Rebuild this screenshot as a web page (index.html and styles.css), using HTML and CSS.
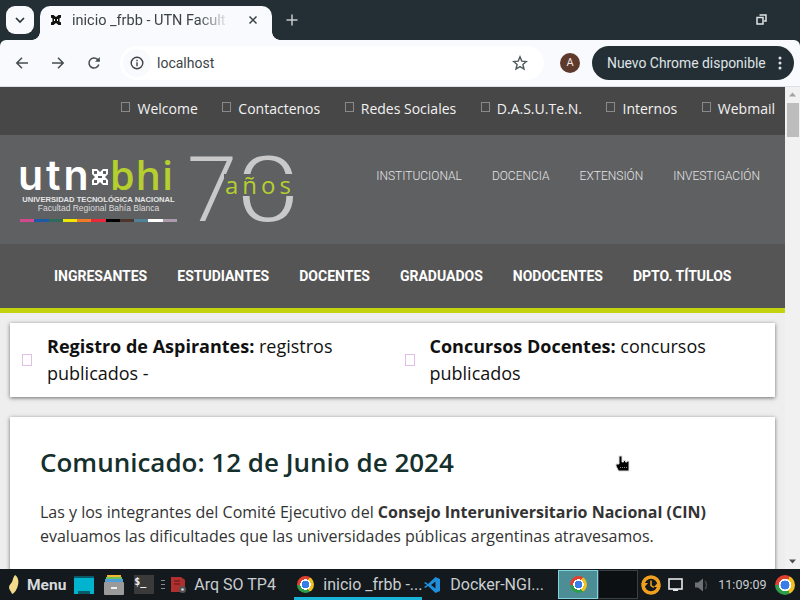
FILE: index.html
```html
<!DOCTYPE html>
<html lang="es">
<head>
    <meta charset="UTF-8">
    <title>inicio _frbb - UTN Facultad Regional Bahía Blanca</title>
    <link rel="stylesheet" href="styles.css">
</head>
<body>
    <!-- browser tabs -->
    <div class="tabstrip">
        <div class="tab-search">
            <svg width="12" height="8" viewBox="0 0 12 8"><path d="M2 2l4 4 4-4" fill="none" stroke="#2a3338" stroke-width="1.700"/></svg>
        </div>
        <div class="tab">
            <svg class="tab-icon" width="12" height="12" viewBox="0 0 12 12"><path d="M1 1h2.500l2.500 2 2.500-2H11v2.500L9.500 4.500v3L11 8.500V11H8.500L6 9l-2.500 2H1V8.500l1.500-1v-3L1 3.500z" fill="#111"/><path d="M4.500 5v2M7.500 5v2" stroke="#fff" stroke-width="1"/></svg>
            <span class="tab-title">inicio _frbb - UTN Facult</span>
            <svg class="tab-close" width="10" height="10" viewBox="0 0 10 10"><path d="M1.500 1.500l7 7M8.500 1.500l-7 7" stroke="#3c4347" stroke-width="1.500"/></svg>
        </div>
        <svg class="tab-new" width="14" height="14" viewBox="0 0 14 14"><path d="M7 1.500v11M1.500 7h11" stroke="#c5cbce" stroke-width="1.500"/></svg>
        <svg class="win-restore" width="11" height="11" viewBox="0 0 11 11"><path d="M3.500 1h6.500v6h-2M1 3.500h6v6.500h-6z" fill="none" stroke="#dfe3e5" stroke-width="1.500"/></svg>
    </div>

    <!-- browser toolbar -->
    <div class="toolbar">
        <svg class="tool" width="14" height="14" viewBox="0 0 14 14"><path d="M13 7H2M7 1.800L1.800 7 7 12.200" fill="none" stroke="#444c50" stroke-width="1.500"/></svg>
        <svg class="tool" width="14" height="14" viewBox="0 0 14 14"><path d="M1 7h11M7 1.800L12.200 7 7 12.200" fill="none" stroke="#444c50" stroke-width="1.500"/></svg>
        <svg class="tool" width="14" height="14" viewBox="0 0 14 14"><path d="M11.800 8.500A5 5 0 1 1 10.500 3.400L12.300 5" fill="none" stroke="#444c50" stroke-width="1.500"/><path d="M12.800 1v4.800H8z" fill="#444c50"/></svg>
        <div class="omnibox">
            <div class="omni-info">
                <svg width="14" height="14" viewBox="0 0 14 14"><circle cx="7" cy="7" r="5.800" fill="none" stroke="#3c4347" stroke-width="1.400"/><path d="M7 6.200v4M7 3.800v1.400" stroke="#3c4347" stroke-width="1.400"/></svg>
            </div>
            <span class="omni-url">localhost</span>
            <svg class="omni-star" width="16" height="16" viewBox="0 0 16 16"><path d="M8 1.800l1.800 4.300 4.600.4-3.500 3 1.100 4.500L8 11.600 4 14l1.100-4.500-3.500-3 4.600-.4z" fill="none" stroke="#4f585c" stroke-width="1.400"/></svg>
        </div>
        <div class="avatar">A</div>
        <div class="update-pill">
            <span>Nuevo Chrome disponible</span>
            <svg width="4" height="14" viewBox="0 0 4 14"><circle cx="2" cy="2" r="1.500" fill="#dfe3e5"/><circle cx="2" cy="7" r="1.500" fill="#dfe3e5"/><circle cx="2" cy="12" r="1.500" fill="#dfe3e5"/></svg>
        </div>
    </div>

    <!-- page viewport -->
    <div class="viewport">
        <div class="page">
            <div class="topbar">
                <a class="toplink"><i class="box"></i>Welcome</a>
                <a class="toplink"><i class="box"></i>Contactenos</a>
                <a class="toplink"><i class="box"></i>Redes Sociales</a>
                <a class="toplink"><i class="box"></i>D.A.S.U.Te.N.</a>
                <a class="toplink"><i class="box"></i>Internos</a>
                <a class="toplink"><i class="box"></i>Webmail</a>
            </div>
            <header class="site-head">
                <div class="logo">
                    <div class="logo-main">
                        <div class="logo-name">
                            <span class="utn">utn</span>
                            <svg class="utn-mark" width="16" height="16" viewBox="0 0 16 16"><path d="M0 0h5l3 3 3-3h5v5l-3 3 3 3v5h-5l-3-3-3 3H0v-5l3-3-3-3z" fill="#fff"/><path d="M2 2h3v3H2zM11 2h3v3h-3zM2 11h3v3H2zM11 11h3v3h-3zM6 7h4v2H6z" fill="#5f6062"/></svg>
                            <span class="bhi">bhi</span>
                        </div>
                        <div class="logo-uni">UNIVERSIDAD TECNOLÓGICA NACIONAL</div>
                        <div class="logo-fac">Facultad Regional Bahía Blanca</div>
                        <div class="logo-stripes">
                            <i class="c1"></i><i class="c2"></i><i class="c3"></i><i class="c4"></i><i class="c5"></i><i class="c6"></i><i class="c7"></i><i class="c8"></i><i class="c9"></i><i class="c10"></i><i class="c11"></i>
                        </div>
                    </div>
                    <div class="logo-70">
                        <span class="seven">7</span><span class="zero">0</span>
                        <span class="anos">años</span>
                    </div>
                </div>
                <nav class="head-nav">
                    <a>INSTITUCIONAL</a>
                    <a>DOCENCIA</a>
                    <a>EXTENSIÓN</a>
                    <a>INVESTIGACIÓN</a>
                </nav>
            </header>
            <nav class="main-nav">
                <a>INGRESANTES</a>
                <a>ESTUDIANTES</a>
                <a>DOCENTES</a>
                <a>GRADUADOS</a>
                <a>NODOCENTES</a>
                <a>DPTO. TÍTULOS</a>
            </nav>
            <div class="content">
                <section class="card news">
                    <div class="news-item">
                        <i class="news-box"></i>
                        <p><b>Registro de Aspirantes:</b> registros publicados -</p>
                    </div>
                    <div class="news-item">
                        <i class="news-box"></i>
                        <p><b>Concursos Docentes:</b> concursos publicados</p>
                    </div>
                </section>
                <section class="card article">
                    <h1>Comunicado: 12 de Junio de 2024</h1>
                    <p>Las y los integrantes del Comité Ejecutivo del <b>Consejo Interuniversitario Nacional (CIN)</b> evaluamos las dificultades que las universidades públicas argentinas atravesamos.</p>
                </section>
            </div>
        </div>
        <div class="scrollbar">
            <svg width="15" height="15" viewBox="0 0 15 15"><path d="M4 9.500h7L7.500 5.500z" fill="#a3a3a3"/></svg>
            <div class="scroll-track"><div class="scroll-thumb"></div></div>
            <svg width="15" height="15" viewBox="0 0 15 15"><path d="M4 5.500h7L7.500 9.500z" fill="#505050"/></svg>
        </div>
        <svg class="cursor" width="16" height="18" viewBox="0 0 16 18"><path d="M4 1h3v6h1.500V5.500h2V7H12V6h2v10H3.500L1 11V9h3z" fill="#000" stroke="#ddd" stroke-width="1"/><path d="M5 12.500h7" stroke="#888" stroke-width="1" stroke-dasharray="1 1"/></svg>
    </div>

    <!-- desktop panel -->
    <div class="panel">
        <div class="panel-menu">
            <svg width="12" height="22" viewBox="0 0 12 22"><path d="M7 1c3 2 4 6 3 10-1 4-3 8-6 9-1-3-3-4-3-7 0-2 2-3 3-5 1-2 1-5 3-7z" fill="#f3d98b"/></svg>
            <b>Menu</b>
        </div>
        <div class="launchers">
            <svg width="20" height="20" viewBox="0 0 20 20"><rect y="1" width="20" height="18" fill="#00b4d0"/><rect y="1" width="20" height="2" fill="#0b5a68"/><rect x="4" y="16" width="12" height="3" fill="#0b5a68"/></svg>
            <svg width="20" height="20" viewBox="0 0 20 20"><rect x="3" y="0" width="14" height="3" fill="#f2b632"/><rect x="2" y="2" width="16" height="3" fill="#6cbf5a"/><rect x="1" y="4" width="18" height="3" fill="#4f9fd8"/><rect y="7" width="20" height="13" rx="1" fill="#9a9a9a"/><rect x="7" y="12" width="6" height="2" fill="#f0f0f0"/></svg>
            <div class="term"><span>$_</span></div>
        </div>
        <svg class="grip" width="4" height="9" viewBox="0 0 4 9"><path d="M0 .5h4M0 4.500h4M0 8.500h4" stroke="#888" stroke-width="1"/></svg>
        <div class="task task-so">
            <svg width="16" height="18" viewBox="0 0 16 18"><path d="M0 1h10l4 3v12H0z" fill="#b03030"/><path d="M3 5h6M3 8h6" stroke="#7c1d1d" stroke-width="1.500"/><circle cx="11.500" cy="13.500" r="3.500" fill="#555"/><circle cx="11.500" cy="13.500" r="1.300" fill="#ddd"/></svg>
            <span>Arq SO TP4</span>
        </div>
        <div class="task task-active">
            <i class="chrome chrome-sm"></i>
            <span>inicio _frbb -...</span>
        </div>
        <div class="task task-code">
            <svg width="16" height="16" viewBox="0 0 16 16"><path d="M11.500 0L16 2v12l-4.500 2L4 9l-2.500 2L0 10l3-2-3-2 1.500-1L4 7z" fill="#1f8fdc"/><path d="M11.500 4.500L7 8l4.500 3.500z" fill="#14181c"/></svg>
            <span>Docker-NGI...</span>
        </div>
        <div class="pager">
            <div class="pager-cell pager-on"><i class="chrome chrome-sm"></i></div>
            <div class="pager-cell"></div>
        </div>
        <div class="tray">
            <svg class="tray-sync" width="22" height="22" viewBox="0 0 22 22"><circle cx="11" cy="11" r="8" fill="none" stroke="#f0a01e" stroke-width="3.500"/><path d="M1 9l3.500 4L8 9zM21 13l-3.500-4L14 13z" fill="#f0a01e"/><path d="M11 6.500v5l3 2" fill="none" stroke="#f0a01e" stroke-width="1.500"/></svg>
            <svg class="tray-screen" width="15" height="14" viewBox="0 0 15 14"><rect x="1" y="1" width="13" height="10" fill="none" stroke="#e8e8e8" stroke-width="1.600"/><path d="M5 12h5" stroke="#e8e8e8" stroke-width="2"/></svg>
            <svg class="tray-sound" width="16" height="16" viewBox="0 0 16 16"><path d="M1 5.500h3L9 1.500v13L4 10.500H1z" fill="#6e7275"/><path d="M11 4c2 2 2 6 0 8" fill="none" stroke="#44484b" stroke-width="1.500"/></svg>
            <span class="clock">11:09:09</span>
            <i class="chrome chrome-lg"></i>
        </div>
    </div>
</body>
</html>
```
FILE: styles.css
```css
/* page frame */
html, body {
    margin: 0;
    height: 100%;
    overflow: hidden;
}

body {
    display: flex;
    flex-direction: column;
    width: 800px;
    height: 600px;
    font-family: Roboto, "Liberation Sans", sans-serif;
    background-color: #242f35;
}

/* tabs */
.tabstrip {
    height: 40px;
    flex: none;
    display: flex;
    align-items: flex-end;
    background-color: #242f35;
}

.tab-search {
    width: 28px;
    height: 28px;
    margin: 0 6px 6px 6px;
    border-radius: 9px;
    background-color: #f8fafd;
    display: flex;
    align-items: center;
    justify-content: center;
}

.tab {
    position: relative;
    width: 232px;
    height: 34px;
    box-sizing: border-box;
    padding: 0 14px 6px 10px;
    display: flex;
    align-items: center;
    background-color: #f8fafd;
    border-radius: 10px 10px 0 0;
}

/* little curves where the tab meets the toolbar */
.tab::before,
.tab::after {
    content: "";
    position: absolute;
    bottom: 0;
    width: 8px;
    height: 8px;
}

.tab::before {
    left: -8px;
    background: radial-gradient(circle at 0 0, #242f35 7.500px, #f8fafd 8px);
}

.tab::after {
    right: -8px;
    background: radial-gradient(circle at 100% 0, #242f35 7.500px, #f8fafd 8px);
}

.tab-icon {
    flex: none;
    margin-right: 10px;
}

.tab-title {
    flex: 1;
    font-size: 14.5px;
    color: #3c4347;
    white-space: nowrap;
    overflow: hidden;
    -webkit-mask-image: linear-gradient(to right, #000 78%, transparent 97%);
    mask-image: linear-gradient(to right, #000 78%, transparent 97%);
}

.tab-close {
    flex: none;
    margin-left: 14px;
}

.tab-new {
    margin: 0 0 13px 13px;
}

.win-restore {
    margin: 0 33px 15px auto;
}

/* toolbar */
.toolbar {
    height: 47px;
    flex: none;
    box-sizing: border-box;
    display: flex;
    align-items: center;
    padding: 0 6px 1px 15px;
    background-color: #f8fafd;
    border-bottom: 1px solid #dde1e4;
    border-radius: 6px 6px 0 0;
}

.tool {
    flex: none;
    margin-right: 22px;
}

.omnibox {
    width: 425px;
    height: 34px;
    margin-left: -3px;
    display: flex;
    align-items: center;
    background-color: #ffffff;
    border-radius: 17px;
}

.omni-info {
    width: 28px;
    height: 28px;
    margin-left: 3px;
    border-radius: 50%;
    background-color: #f8fafd;
    display: flex;
    align-items: center;
    justify-content: center;
}

.omni-url {
    margin-left: 6px;
    font-size: 14px;
    color: #3c4347;
}

.omni-star {
    margin: 0 16px 0 auto;
}

.avatar {
    width: 20px;
    height: 20px;
    flex: none;
    margin-left: 16px;
    border-radius: 50%;
    background-color: #5e3a2c;
    color: #f2e6e0;
    font-size: 11px;
    line-height: 20px;
    text-align: center;
}

.update-pill {
    flex: none;
    width: 202px;
    height: 34px;
    box-sizing: border-box;
    margin-left: 12px;
    padding: 0 12px 0 15px;
    display: flex;
    align-items: center;
    justify-content: space-between;
    border-radius: 17px;
    background-color: #242f35;
    color: #dfe3e5;
    font-size: 13.900px;
}

/* viewport */
.viewport {
    position: relative;
    flex: 1;
    display: flex;
    min-height: 0;
    background-color: #eeeeee;
    overflow: hidden;
}

.page {
    width: 785px;
    flex: none;
}

.scrollbar {
    width: 15px;
    flex: none;
    display: flex;
    flex-direction: column;
    background-color: #f1f1f1;
}

.scroll-track {
    flex: 1;
}

.scroll-thumb {
    height: 34px;
    margin: 1px 1px 0 2px;
    background-color: #bdbdbd;
}

.cursor {
    position: absolute;
    left: 615px;
    top: 368px;
}

/* site top links */
.topbar {
    height: 48px;
    box-sizing: border-box;
    display: flex;
    justify-content: flex-end;
    align-items: center;
    padding: 0 10px 6px 0;
    gap: 24.600px;
    background-color: #474747;
}

.toplink {
    display: flex;
    align-items: center;
    font-family: "Open Sans", sans-serif;
    font-size: 14px;
    color: #f2f2f2;
}

.box {
    width: 7px;
    height: 8px;
    margin: -3px 7px 0 0;
    border: 1px solid #8a8a8a;
}

/* site header */
.site-head {
    height: 109px;
    display: flex;
    justify-content: space-between;
    background-color: #5f6062;
}

.logo {
    display: flex;
    margin: 20px 0 0 20px;
}

.logo-main {
    width: 157px;
}

.logo-name {
    display: flex;
    align-items: flex-end;
    height: 34px;
    white-space: nowrap;
}

.utn {
    margin-left: -2px;
    font-family: Inter, sans-serif;
    font-weight: 600;
    font-size: 41px;
    line-height: 40px;
    height: 34px;
    letter-spacing: 3px;
    color: #ffffff;
}

.utn-mark {
    flex: none;
    margin: 0 2px 4px 0;
}

.bhi {
    font-family: "Open Sans", sans-serif;
    font-weight: 600;
    font-size: 40px;
    line-height: 40px;
    height: 34px;
    letter-spacing: 1px;
    color: #b5cf2f;
}

.logo-uni {
    margin-top: 7px;
    font-family: "Liberation Sans", sans-serif;
    font-weight: 700;
    font-size: 7.600px;
    line-height: 8px;
    color: #e6e6e6;
    text-align: center;
    white-space: nowrap;
}

.logo-fac {
    font-family: "Liberation Sans", sans-serif;
    font-size: 8.500px;
    line-height: 9px;
    text-align: center;
    color: #dcdcdc;
    white-space: nowrap;
}

.logo-stripes {
    display: flex;
    height: 3px;
    margin-top: 6px;
}

.logo-stripes i {
    flex: 1;
}

.c1 { background-color: #d34a8c; }
.c2 { background-color: #1c5aa8; }
.c3 { background-color: #2e6b5e; }
.c4 { background-color: #f2e500; }
.c5 { background-color: #f07a2a; }
.c6 { background-color: #ea2a3a; }
.c7 { background-color: #000000; }
.c8 { background-color: #4f362c; }
.c9 { background-color: #4f8296; }
.c10 { background-color: #ffffff; }
.c11 { background-color: #ad9bad; }

.logo-70 {
    position: relative;
    display: flex;
    width: 118px;
    height: 70px;
    margin: 1px 0 0 10px;
    font-family: Roboto, sans-serif;
    font-weight: 300;
    font-size: 90px;
    line-height: 70px;
    color: #c9c9c9;
}

.seven {
    width: 49px;
}

.zero {
    transform: scaleX(1.280);
    transform-origin: left;
}

.anos {
    position: absolute;
    left: 37px;
    top: 18px;
    padding: 0 1px;
    background-color: #5f6062;
    font-family: "Open Sans", sans-serif;
    font-weight: 500;
    font-size: 24px;
    line-height: 22px;
    letter-spacing: 4px;
    color: #b5cf2f;
}

.head-nav {
    display: flex;
    gap: 30px;
    padding: 34px 25px 0 0;
    height: 20px;
    font-family: Roboto, sans-serif;
    font-weight: 300;
    font-size: 12px;
    line-height: 14px;
    color: #e4e4e4;
}

/* main menu */
.main-nav {
    height: 64px;
    box-sizing: border-box;
    display: flex;
    align-items: center;
    gap: 30px;
    padding-left: 54px;
    background-color: #555555;
    font-family: Roboto, sans-serif;
    font-weight: 700;
    font-size: 14px;
    color: #ffffff;
}

/* content */
.content {
    border-top: 5px solid #c3d40e;
    padding: 10px 10px 0;
}

.card {
    background-color: #ffffff;
    box-shadow: 0 1px 4px rgba(0, 0, 0, 0.55);
    font-family: "Open Sans", sans-serif;
}

.news {
    display: flex;
    height: 74px;
}

.news-item {
    width: 383px;
    display: flex;
    align-items: center;
    padding-left: 12px;
    box-sizing: border-box;
}

.news-item p {
    margin: 0;
    width: 310px;
    font-size: 18px;
    line-height: 27px;
    color: #111111;
}

.news-box {
    width: 8px;
    height: 10px;
    flex: none;
    margin-right: 15px;
    border: 1px solid #e0bfe6;
}

.article {
    margin-top: 20px;
    padding: 29px 30px 30px;
    height: 160px;
}

.article h1 {
    margin: 0 0 22px;
    font-size: 26px;
    line-height: 32px;
    font-weight: 600;
    color: #15302c;
}

.article p {
    margin: 0;
    font-size: 16px;
    line-height: 24px;
    color: #333333;
}

/* desktop panel */
.panel {
    height: 31px;
    flex: none;
    display: flex;
    align-items: center;
    background-color: #14191d;
    color: #c9ced1;
    font-size: 16px;
}

.panel-menu {
    display: flex;
    align-items: center;
    gap: 7px;
    padding-left: 8px;
    font-size: 15.500px;
    color: #d6dadd;
}

.launchers {
    display: flex;
    align-items: center;
    gap: 10px;
    margin-left: 8px;
}

.term {
    width: 20px;
    height: 19px;
    background-color: #3a3a3a;
    color: #eeeeee;
    font-family: "DejaVu Sans Mono", monospace;
    font-weight: 700;
    font-size: 10px;
    line-height: 14px;
}

.grip {
    flex: none;
    margin: 0 6px 0 7px;
}

.task {
    height: 31px;
    box-sizing: border-box;
    display: flex;
    align-items: center;
    white-space: nowrap;
}

.task-so {
    gap: 7px;
    width: 123px;
}

.task-active {
    width: 128px;
    gap: 9px;
    padding: 3px 0 0 3px;
    border-bottom: 3px solid #18b5d8;
}

.task-code {
    width: 130px;
    gap: 10px;
    padding-left: 2px;
}

.pager {
    display: flex;
    height: 29px;
    margin-left: 6px;
}

.pager-cell {
    width: 40px;
    box-sizing: border-box;
    border: 1px solid #3a4145;
    background-color: #0c1013;
    display: flex;
    align-items: center;
    justify-content: center;
}

.pager-on {
    border-color: #7fd4e0;
    background-color: #4d8e96;
}

.tray {
    display: flex;
    align-items: center;
    margin-left: 2px;
}

.tray-screen {
    margin-left: 6px;
}

.tray-sound {
    margin-left: 11px;
}

.clock {
    margin-left: 8px;
    font-size: 12.500px;
    color: #c9ced1;
}

/* chrome icon, drawn with css */
.chrome {
    display: block;
    flex: none;
    border-radius: 50%;
    background: radial-gradient(closest-side, #3a7de8 0 44%, #ffffff 46% 60%, transparent 62%),
        conic-gradient(from 30deg, #f0c020 0 120deg, #2f9e4a 120deg 240deg, #e04030 240deg 360deg);
}

.chrome-sm {
    width: 17px;
    height: 17px;
}

.chrome-lg {
    width: 20px;
    height: 20px;
    margin-left: 8px;
}
```
